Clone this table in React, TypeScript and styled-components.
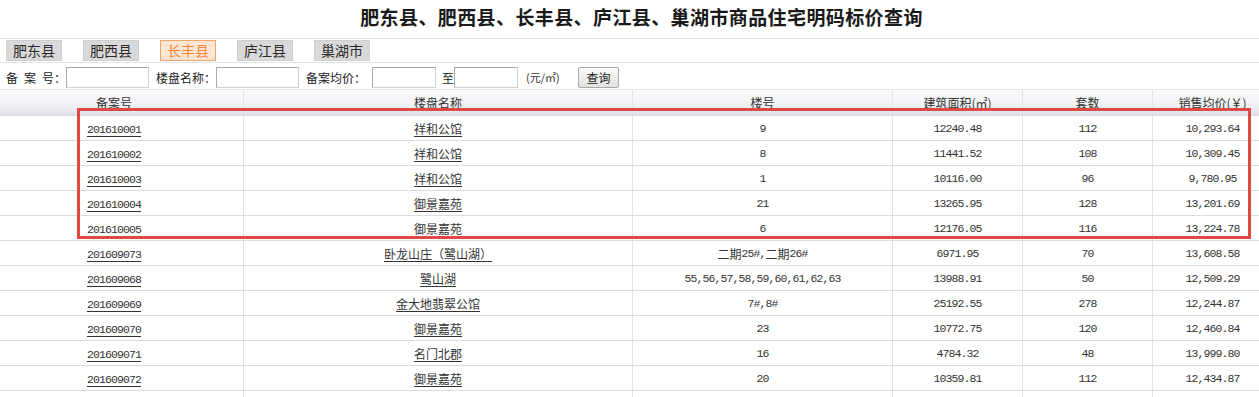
import React from "react";
import styled, { createGlobalStyle } from "styled-components";

const Global = createGlobalStyle`
  html, body {
    margin: 0;
    padding: 0;
    overflow: hidden;
    background: #ffffff;
  }
  body {
    font-family: "Noto Sans CJK SC", "Noto Sans", sans-serif;
    font-size: 12px;
    color: #333333;
  }
`;

const Page = styled.div`
  width: 1283px;
  position: relative;
`;

const Title = styled.h1`
  margin: 0;
  height: 38px;
  line-height: 33px;
  text-align: center;
  font-size: 19px;
  font-weight: 700;
  letter-spacing: 0.4px;
  color: #1a1a1a;
  border-bottom: 1px solid #e3e3e3;
`;

const TabBar = styled.div`
  display: flex;
  gap: 21px;
  height: 24px;
  box-sizing: border-box;
  padding: 1px 0 0 6px;
  border-bottom: 1px solid #e3e3e3;
`;

const Tab = styled.div<{ $active?: boolean }>`
  width: 56px;
  height: 21px;
  box-sizing: border-box;
  line-height: 19px;
  text-align: center;
  font-size: 14px;
  border: 1px solid ${(p) => (p.$active ? "#eea56b" : "#cfcfcf")};
  background: ${(p) => (p.$active ? "#fce6d3" : "#d9d9d9")};
  color: ${(p) => (p.$active ? "#f1873a" : "#2a2a2a")};
  cursor: pointer;
`;

const SearchBar = styled.div`
  display: flex;
  align-items: flex-start;
  height: 27px;
  box-sizing: border-box;
  padding: 4px 0 0 6px;
  border-bottom: 1px solid #e3e3e3;
`;

const Label = styled.span<{ $w: number; $ml?: number }>`
  width: ${(p) => p.$w}px;
  margin-left: ${(p) => p.$ml ?? 0}px;
  line-height: 21px;
  white-space: pre;
  color: #222;
  flex: none;
`;

const Input = styled.input<{ $w: number }>`
  width: ${(p) => p.$w}px;
  height: 21px;
  box-sizing: border-box;
  border: 1px solid #a9a9a9;
  border-right-color: #d0d0d0;
  border-bottom-color: #d0d0d0;
  padding: 0 2px;
  margin: 0;
  flex: none;
  background: #fff;
  font-size: 12px;
`;

const Unit = styled.span`
  margin-left: 8px;
  width: 44px;
  line-height: 21px;
  font-size: 11px;
  color: #333;
  flex: none;
`;

const Button = styled.button`
  margin: 0 0 0 8px;
  width: 41px;
  height: 21px;
  box-sizing: border-box;
  padding: 0;
  border: 1px solid #a8a8a8;
  border-radius: 2px;
  background: linear-gradient(to bottom, #fafafa, #e2e2e2);
  font-family: "Noto Sans CJK SC", sans-serif;
  font-size: 12px;
  color: #222;
  line-height: 19px;
  flex: none;
`;

const COLS = "244px 389px 260px 130px 130px 120px";

const HeadRow = styled.div`
  display: grid;
  grid-template-columns: ${COLS};
  height: 26px;
  box-sizing: border-box;
  border-bottom: 1px solid #d8dbe2;
  background: linear-gradient(to bottom, #fbfbfc 0%, #f1f2f5 55%, #dfe2ea 100%);
`;

const Row = styled.div`
  display: grid;
  grid-template-columns: ${COLS};
  height: 25px;
  box-sizing: border-box;
  border-bottom: 1px solid #dcdcdc;
`;

const Cell = styled.div<{ $first?: boolean }>`
  display: flex;
  align-items: center;
  justify-content: center;
  border-right: 1px solid #e2e2e2;
  padding-right: ${(p) => (p.$first ? 15 : 0)}px;
  white-space: nowrap;
  color: #333;
  overflow: hidden;
`;

const HeadCell = styled(Cell)`
  color: #333;
`;

const Link = styled.a`
  color: #333;
  text-decoration: underline;
  text-underline-offset: 2px;
  cursor: pointer;
`;

const Mono = styled.span`
  font-family: "Liberation Mono", "DejaVu Sans Mono", monospace;
  font-size: 11.5px;
  letter-spacing: -0.9px;
  vertical-align: 1px;
`;

const Highlight = styled.div`
  position: absolute;
  left: 77px;
  top: 108px;
  width: 1174px;
  height: 131px;
  box-sizing: border-box;
  border: 3px solid #dc4a43;
  pointer-events: none;
`;

const mixed = (s: string) =>
  s
    .split(/([\x00-\x7f]+)/)
    .filter(Boolean)
    .map((part, i) =>
      /^[\x00-\x7f]+$/.test(part) ? (
        <Mono key={i}>{part}</Mono>
      ) : (
        <span key={i}>{part}</span>
      )
    );

type Rec = [string, string, string, string, string, string];

const rows: Rec[] = [
  ["201610001", "祥和公馆", "9", "12240.48", "112", "10,293.64"],
  ["201610002", "祥和公馆", "8", "11441.52", "108", "10,309.45"],
  ["201610003", "祥和公馆", "1", "10116.00", "96", "9,780.95"],
  ["201610004", "御景嘉苑", "21", "13265.95", "128", "13,201.69"],
  ["201610005", "御景嘉苑", "6", "12176.05", "116", "13,224.78"],
  ["201609073", "卧龙山庄（鹭山湖）", "二期25#,二期26#", "6971.95", "70", "13,608.58"],
  ["201609068", "鹭山湖", "55,56,57,58,59,60,61,62,63", "13988.91", "50", "12,509.29"],
  ["201609069", "金大地翡翠公馆", "7#,8#", "25192.55", "278", "12,244.87"],
  ["201609070", "御景嘉苑", "23", "10772.75", "120", "12,460.84"],
  ["201609071", "名门北郡", "16", "4784.32", "48", "13,999.80"],
  ["201609072", "御景嘉苑", "20", "10359.81", "112", "12,434.87"],
];

const tabs = ["肥东县", "肥西县", "长丰县", "庐江县", "巢湖市"];

export default function App() {
  return (
    <Page>
      <Global />
      <Title>肥东县、肥西县、长丰县、庐江县、巢湖市商品住宅明码标价查询</Title>
      <TabBar>
        {tabs.map((t) => (
          <Tab key={t} $active={t === "长丰县"}>
            {t}
          </Tab>
        ))}
      </TabBar>
      <SearchBar>
        <Label $w={60}>{"备\u2002案\u2002号："}</Label>
        <Input $w={83} />
        <Label $w={60} $ml={7}>楼盘名称：</Label>
        <Input $w={83} />
        <Label $w={66} $ml={7}>备案均价：</Label>
        <Input $w={64} />
        <Label $w={12} $ml={6}>至</Label>
        <Input $w={64} />
        <Unit>(元/㎡)</Unit>
        <Button>查询</Button>
      </SearchBar>
      <HeadRow>
        <HeadCell $first>备案号</HeadCell>
        <HeadCell>楼盘名称</HeadCell>
        <HeadCell>楼号</HeadCell>
        <HeadCell>建筑面积(㎡)</HeadCell>
        <HeadCell>套数</HeadCell>
        <HeadCell>销售均价(￥)</HeadCell>
      </HeadRow>
      {rows.map((r) => (
        <Row key={r[0]}>
          <Cell $first>
            <Link>{mixed(r[0])}</Link>
          </Cell>
          <Cell>
            <Link>{mixed(r[1])}</Link>
          </Cell>
          <Cell>{mixed(r[2])}</Cell>
          <Cell>{mixed(r[3])}</Cell>
          <Cell>{mixed(r[4])}</Cell>
          <Cell>{mixed(r[5])}</Cell>
        </Row>
      ))}
      <Row>
        <Cell $first />
        <Cell />
        <Cell />
        <Cell />
        <Cell />
        <Cell />
      </Row>
      <Highlight />
    </Page>
  );
}
